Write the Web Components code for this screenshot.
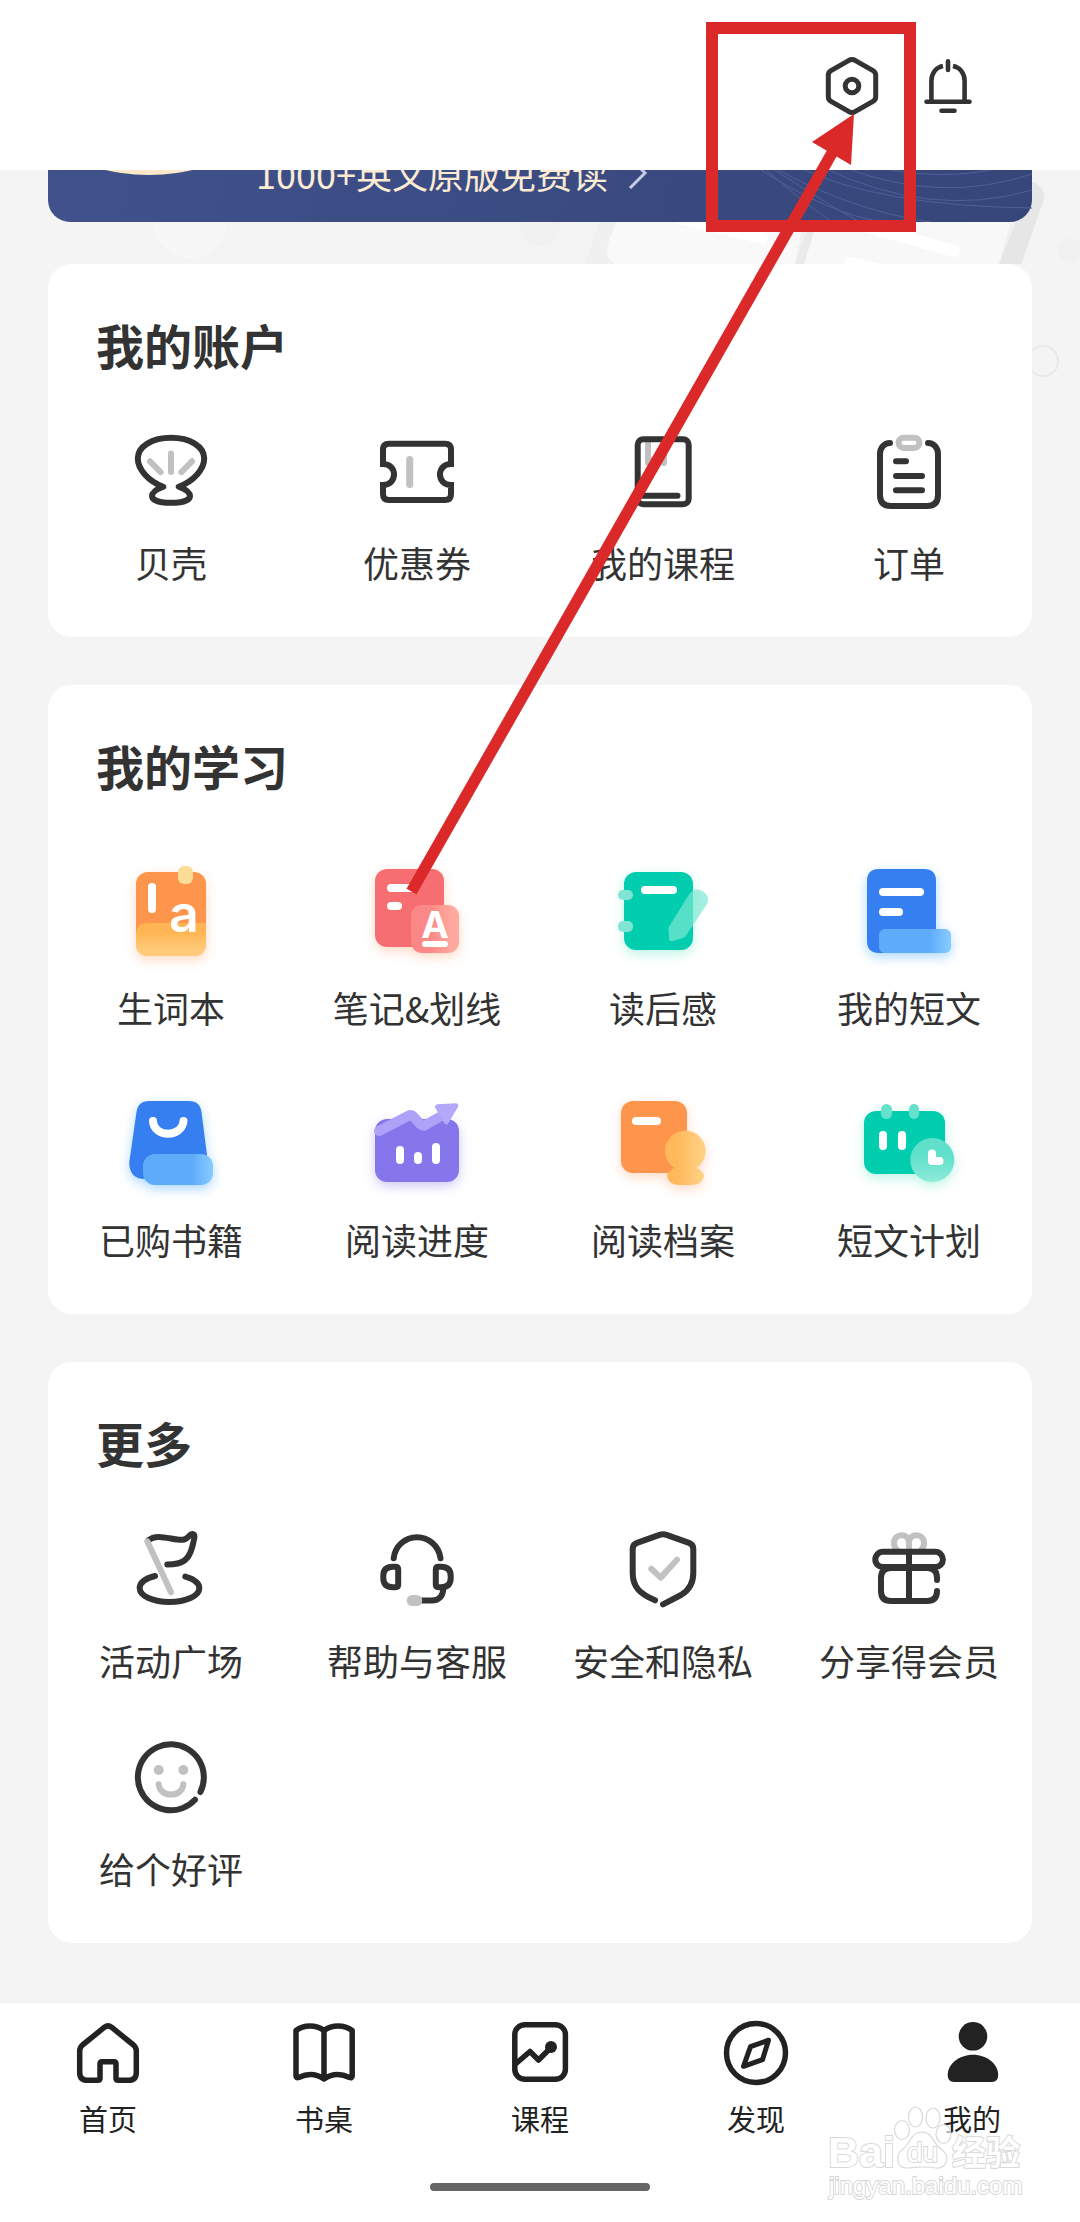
<!DOCTYPE html>
<html lang="zh-CN">
<head>
<meta charset="utf-8">
<meta name="viewport" content="width=device-width, initial-scale=1">
<title>我的</title>
<style>
  body {
    margin: 0;
    background: #f4f4f4;
    color: #333;
    font-family: "Noto Sans CJK SC", "Noto Sans", sans-serif;
  }
</style>
</head>
<body>
<profile-page>
  <top-bar slot="header"></top-bar>

  <promo-banner href="#vip">1000+英文原版免费读</promo-banner>

  <menu-card heading="我的账户">
    <menu-item icon="shell">贝壳</menu-item>
    <menu-item icon="coupon">优惠券</menu-item>
    <menu-item icon="course">我的课程</menu-item>
    <menu-item icon="order">订单</menu-item>
  </menu-card>

  <menu-card heading="我的学习">
    <menu-item icon="words">生词本</menu-item>
    <menu-item icon="notes">笔记&amp;划线</menu-item>
    <menu-item icon="review">读后感</menu-item>
    <menu-item icon="essay">我的短文</menu-item>
    <menu-item icon="bought">已购书籍</menu-item>
    <menu-item icon="progress">阅读进度</menu-item>
    <menu-item icon="archive">阅读档案</menu-item>
    <menu-item icon="plan">短文计划</menu-item>
  </menu-card>

  <menu-card heading="更多">
    <menu-item icon="flag">活动广场</menu-item>
    <menu-item icon="headset">帮助与客服</menu-item>
    <menu-item icon="shield">安全和隐私</menu-item>
    <menu-item icon="gift">分享得会员</menu-item>
    <menu-item icon="smile">给个好评</menu-item>
  </menu-card>

  <tab-bar slot="footer">
    <tab-item icon="home">首页</tab-item>
    <tab-item icon="desk">书桌</tab-item>
    <tab-item icon="lesson">课程</tab-item>
    <tab-item icon="discover">发现</tab-item>
    <tab-item icon="me" current>我的</tab-item>
  </tab-bar>

  <callout-layer slot="overlay"></callout-layer>
  <site-mark slot="overlay"></site-mark>
</profile-page>

<script>
// Each icon is [viewBox size, markup]. "s" strokes, "g" is the grey accent, "w" is white.
const ICONS = {
  settings: [72, `
    <g class="s" stroke-width="5">
      <path d="M33 10.3 Q36 8.7 39 10.3 L57 20.6 Q59.7 22.2 59.7 25.3 V46.7 Q59.7 49.8 57 51.4 L39 61.7 Q36 63.3 33 61.7 L15 51.4 Q12.3 49.8 12.3 46.7 V25.3 Q12.3 22.2 15 20.6Z"/>
      <circle cx="36" cy="36" r="6.8"/>
    </g>`],
  bell: [72, `
    <g class="s" stroke-width="4.6">
      <path d="M19.4 51 V31 C19.4 23 24 17.5 31 16" stroke-linecap="butt"/>
      <path d="M52.6 51 V31 C52.6 23 48 17.5 41 16" stroke-linecap="butt"/>
      <path d="M36 11.3 V20 M14.5 51.8 H57.5 M29.5 60.8 H42.5"/>
    </g>`],
  shell: [96, `
    <path class="s" d="M40.3 62.7 C25 57 14.8 45 14.8 34.5 C14.8 22.5 29 13.7 48 13.7 S81.2 22.5 81.2 34.5 C81.2 45 71 57 55.7 62.7 C62 65 67 68.5 67 72 C67 76.5 58.5 78.8 48 78.8 S29 76.5 29 72 C29 68.5 34 65 40.3 62.7Z"/>
    <path class="g" d="M27 37.3 L37.6 48.2 M48 29.5 V48 M69 37.3 L58.4 48.2"/>`],
  coupon: [96, `
    <path class="s" stroke-linejoin="miter" d="M14 40 V25.5 Q14 19.7 20 19.7 H76 Q82 19.7 82 25.5 V40 C75 40 71 45 71 50.5 S75 61 82 61 V70 Q82 76 76 76 H20 Q14 76 14 70 V61 C21 61 25 56 25 50.5 S21 40 14 40Z"/>
    <path class="g" stroke-width="7" d="M40.7 35.5 V60.5"/>`],
  course: [96, `
    <path class="g" d="M33 18 V39 L41 35 L49 39 V18"/>
    <rect class="s" x="22.7" y="15.2" width="51" height="65" rx="5.5"/>
    <path class="s" d="M24 71.7 H62.5"/>`],
  order: [96, `
    <path class="s" d="M29 19 C23 19 19 24 19 30 V71 Q19 82 30 82 H66 Q77 82 77 71 V30 C77 24 73 19 67 19"/>
    <path class="s" d="M35 37.3 H45 M35 52 H61 M35 66.3 H61"/>
    <rect class="g" x="37.6" y="13.7" width="20.8" height="10.2" rx="5"/>`],
  flag: [96, `
    <path class="s" d="M25.5 18.3 C34 10.5 50 18.6 60 17.8 C66 17 66 11.6 69.5 12 C73 12.6 71 17.5 69.5 24 C66 38 60 42.5 44.3 42.6"/>
    <path class="s" d="M32 54 C22 56.5 16.7 61 16.7 66.3 C16.7 74 30 80 46.5 80 S76.3 74 76.3 66.3 C76.3 61 71 57 62.3 54.6"/>
    <path class="g" d="M24.3 19.3 L48 70.3"/>`],
  headset: [96, `
    <path class="s" d="M24.7 36.3 C26 24 36 15.2 48 15.2 S70 24 71.5 36.3"/>
    <path class="s" d="M29.2 47.5 Q29.2 44.8 26.5 44.8 H24 Q14.3 44.8 14.3 54 V56 Q14.3 65.2 24 65.2 H26.5 Q29.2 65.2 29.2 62.5Z"/>
    <path class="s" d="M66.8 47.5 Q66.8 44.8 69.5 44.8 H72 Q81.7 44.8 81.7 54 V56 Q81.7 65.2 72 65.2 H69.5 Q66.8 65.2 66.8 62.5Z"/>
    <path class="s" d="M74.3 66 C74.3 74 70 78.6 63 78.6 H53"/>
    <rect x="37.7" y="73" width="15.6" height="11" rx="5.5" fill="#c1c1c1"/>`],
  shield: [96, `
    <path class="s" d="M40 78.3 C26 72 17.7 66 17.7 51 V27 Q17.7 22.3 22 20.8 L44.5 12.9 Q48 11.7 51.5 12.9 L74 20.8 Q78.3 22.3 78.3 27 V51 C78.3 60 74.5 68 66 73 L48 82.3"/>
    <path class="g" d="M36.3 46.7 L45.7 55.6 L62 37.8"/>`],
  gift: [96, `
    <path class="g" d="M48 28 V20.5 C48 10.5 33 11 33 21 Q33 25 36 28 M48 20.5 C48 10.5 63 11 63 21 Q63 25 60 28"/>
    <rect class="s" x="14.3" y="29.8" width="67.6" height="15.2" rx="7.6"/>
    <path class="s" d="M76 58 V56 Q76 46 66 46 H30 Q20 46 20 56 V69 Q20 79 30 79 H66 Q76 79 76 69"/>
    <path class="s" d="M48 30 V79"/>`],
  smile: [96, `
    <path class="s" d="M77.4 62 A33 33 0 1 0 72 69.8"/>
    <path class="g" d="M35.7 54.3 C36.5 68 59.5 68 60.3 54.3"/>
    <circle cx="35.7" cy="40" r="5" fill="#c1c1c1"/>
    <circle cx="60.3" cy="40" r="5" fill="#c1c1c1"/>`],

  words: [120, `
    <g class="warm">
      <rect x="25" y="27" width="70" height="84" rx="12" fill="#fe954c"/>
      <path d="M25 90 Q25 78 37 78 H95 V99 Q95 111 83 111 H37 Q25 111 25 99Z" fill="url(#amber)"/>
    </g>
    <rect x="67" y="21" width="15" height="18" rx="6" fill="#fddc95"/>
    <rect class="w" x="37" y="38" width="8" height="30" rx="4"/>
    <text class="w" x="73" y="87" font-size="52" font-weight="600" text-anchor="middle">a</text>`],
  notes: [120, `
    <g class="warm">
      <rect x="18" y="24" width="69" height="78" rx="12" fill="#f76e72"/>
      <rect x="54" y="60" width="48" height="48" rx="11" fill="url(#rose)"/>
    </g>
    <rect class="w" x="30" y="39" width="28" height="8" rx="4"/>
    <rect class="w" x="30" y="57" width="15" height="8" rx="4"/>
    <text class="w" x="78" y="93" font-size="37" font-weight="700" text-anchor="middle">A</text>
    <rect class="w" x="65" y="96" width="26" height="6" rx="3"/>`],
  review: [120, `
    <rect class="mint" x="21" y="27" width="69" height="78" rx="12" fill="#02ceaf"/>
    <rect class="w" x="38" y="41" width="36" height="8" rx="4"/>
    <rect x="15" y="45" width="15" height="10" rx="5" fill="#80e6d3"/>
    <rect x="15" y="76" width="15" height="11" rx="5" fill="#80e6d3"/>
    <path d="M65.5 82.5 L86 49.5 Q91.5 41.5 99.5 46 Q108 51.5 103.7 59.5 L83 90.5 Q82 92.3 80 93 L69.5 96 Q66.2 96.8 66 93.5Z" fill="rgba(123, 232, 209, 0.7)"/>`],
  essay: [120, `
    <g class="sky">
      <path d="M30 24 H75 Q87 24 87 36 V108 H30 Q18 108 18 96 V36 Q18 24 30 24Z" fill="#357ff0"/>
      <rect x="30" y="84" width="72" height="24" rx="6" fill="url(#azure)"/>
    </g>
    <rect class="w" x="30" y="43" width="45" height="8" rx="4"/>
    <rect class="w" x="30" y="63" width="24" height="8" rx="4"/>`],
  bought: [120, `
    <g class="sky">
      <path d="M38 24 H78 Q89 24 90.5 35 L97 86 Q97 102 84 102 H34 Q18 102 18.3 85 L25.5 35 Q27 24 38 24Z" fill="#357ff0"/>
      <rect x="32" y="77" width="70" height="31" rx="12" fill="url(#azure)"/>
    </g>
    <path d="M42 44 C43 61 71 61 72.5 44" fill="none" stroke="#fff" stroke-width="8" stroke-linecap="round"/>`],
  progress: [120, `
    <rect class="violet" x="18" y="42" width="84" height="63" rx="12" fill="#8576ec"/>
    <path d="M22 54 L52 38.5 Q54.5 37.5 56.5 39.5 L63 47 Q65.5 49.5 68.5 48 L86 38" fill="none" stroke="#aea2f8" stroke-width="10" stroke-linecap="round" stroke-linejoin="round"/>
    <path d="M80.5 29.8 L98.8 28.8 L89.3 44.8Z" fill="#b3a8f9" stroke="#b3a8f9" stroke-width="5" stroke-linejoin="round"/>
    <rect class="w" x="39" y="69" width="8" height="18" rx="4"/>
    <rect class="w" x="57" y="75" width="8" height="12" rx="4"/>
    <rect class="w" x="75" y="66" width="8" height="21" rx="4"/>`],
  archive: [120, `
    <g class="warm">
      <rect x="18" y="24" width="66" height="72" rx="12" fill="#fe954c"/>
      <path d="M69 92 Q82 85 96 92 Q101 96 101 99.5 Q99 108 88 108 H77 Q66 108 64 99.5 Q64 96 69 92Z" fill="url(#honey)"/>
      <circle cx="82.3" cy="74" r="20.3" fill="url(#honey)"/>
    </g>
    <rect class="w" x="29" y="40" width="29" height="8" rx="4"/>`],
  plan: [120, `
    <g class="mint">
      <rect x="15" y="34" width="81" height="63" rx="12" fill="#02ceaf"/>
      <circle cx="83.3" cy="83" r="22" fill="url(#aqua)"/>
    </g>
    <rect x="32" y="27" width="11" height="15" rx="5.5" fill="#66e1cc"/>
    <rect x="60" y="27" width="10" height="15" rx="5" fill="#66e1cc"/>
    <rect class="w" x="30" y="54" width="8" height="19" rx="4"/>
    <rect class="w" x="49" y="54" width="8" height="19" rx="4"/>
    <path d="M83 76.5 V84 H90.5" fill="none" stroke="#fff" stroke-width="8" stroke-linecap="round" stroke-linejoin="round"/>`],

  home: [72, `<path class="s t" d="M10.5 28 L32.5 10.2 Q36 7.6 39.5 10.2 L61.5 28 Q64.3 30.5 64.3 34 V55.5 Q64.3 63.3 56.5 63.3 H46 Q44 63.3 44 61.3 V46.7 Q44 44.7 42 44.7 H30 Q28 44.7 28 46.7 V61.3 Q28 63.3 26 63.3 H15.5 Q7.7 63.3 7.7 55.5 V34 Q7.7 30.5 10.5 28Z"/>`],
  desk: [72, `<path class="s t" d="M8 13.5 C16 7.5 28 7.5 36 13.5 C44 7.5 56 7.5 64.2 13.5 V59 Q64.2 61.5 61.5 60.5 C53 56.5 44 56.5 36 62 C28 56.5 19 56.5 10.8 60.5 Q8 61.5 8 59Z M36 13.5 V61"/>`],
  lesson: [72, `
    <rect class="s t" x="10.8" y="7.7" width="50.6" height="54.6" rx="10"/>
    <path class="s t" d="M12 46.5 L26 34.5 L34.5 43 L46 31.5"/>
    <circle class="f" cx="47" cy="30" r="6"/>`],
  discover: [72, `
    <circle class="s t" cx="36" cy="36" r="29.5"/>
    <path class="s t" stroke-width="5" d="M48.5 23.2 L30.5 29.7 L23.5 49.3 L42.5 42.7Z"/>`],
  me: [72, `
    <circle class="f" cx="37" cy="19.3" r="14.3"/>
    <path class="f" d="M37 37.7 C51 37.7 62.2 47 62.2 58 Q62.2 65 56 65 H18 Q11.7 65 11.7 58 C11.7 47 23 37.7 37 37.7Z"/>`],
};

const GRADIENTS = `
  <defs>
    <linearGradient id="amber" x1="0" y1="0" x2="0" y2="1"><stop offset="0.3" stop-color="#ffb553"/><stop offset="0.8" stop-color="#ffca7a"/></linearGradient>
    <linearGradient id="rose"><stop offset="0.4" stop-color="#fb8886"/><stop offset="0.85" stop-color="#ffa99f"/></linearGradient>
    <linearGradient id="azure"><stop offset="0.7" stop-color="#5eabfa"/><stop offset="1" stop-color="#88ccff"/></linearGradient>
    <linearGradient id="honey"><stop offset="0.3" stop-color="#ffb95c"/><stop offset="0.9" stop-color="#ffcf82"/></linearGradient>
    <linearGradient id="aqua" x1="0" y1="0" x2="0" y2="1"><stop offset="0.4" stop-color="#60e0cb"/><stop offset="1" stop-color="#8eead9"/></linearGradient>
  </defs>`;

const attach = (host, html) => {
  const template = document.createElement('template');
  template.innerHTML = html;
  host.attachShadow({mode: 'open'}).append(template.content.cloneNode(true));
};

class AppIcon extends HTMLElement {
  connectedCallback() {
    if (this.shadowRoot) {
      return;
    }
    const [size, shapes] = ICONS[this.getAttribute('name')];
    attach(this, `
      <style>
        :host { display: block; width: ${size}px; height: ${size}px; }
        svg { display: block; width: 100%; height: 100%; overflow: visible; }
        text { font-family: Inter, "Liberation Sans", sans-serif; }
        .s, .g { fill: none; stroke: #333; stroke-linecap: round; }
        .s:not([stroke-linejoin]), .g { stroke-linejoin: round; }
        .g { stroke: #c1c1c1; }
        .t { stroke: #222; }
        .f { fill: #222; }
        .w { fill: #fff; }
        .warm { filter: drop-shadow(0 4px 6px rgba(255, 150, 90, 0.35)); }
        .mint { filter: drop-shadow(0 4px 6px rgba(60, 225, 180, 0.35)); }
        .sky { filter: drop-shadow(0 4px 6px rgba(70, 170, 255, 0.45)); }
        .violet { filter: drop-shadow(0 4px 6px rgba(133, 118, 236, 0.4)); }
      </style>
      <svg viewBox="0 0 ${size} ${size}" stroke-width="${size === 72 ? 5.5 : 6}" aria-hidden="true">
        ${size === 120 ? GRADIENTS : ''}${shapes}
      </svg>`);
  }
}

class ProfilePage extends HTMLElement {
  constructor() {
    super();
    attach(this, `
      <style>
        :host { position: relative; display: flex; flex-direction: column; min-height: 100vh; overflow: hidden; }
        main { position: relative; flex: 1; display: flex; flex-direction: column; gap: 48px; padding: 0 48px 60px; }
        ::slotted([slot="header"]) { position: relative; z-index: 2; }
        .backdrop { position: absolute; top: 0; right: 0; width: 1080px; height: 240px; }
      </style>
      <slot name="header"></slot>
      <main>
        <svg class="backdrop" viewBox="0 170 1080 240" aria-hidden="true">
          <ellipse cx="190" cy="225" rx="36" ry="33" fill="#f7f7f7"/>
          <circle cx="540" cy="226" r="20" fill="#f1f1f1"/>
          <path d="M585 264 L610 190 H1015 Q1045 180 1044 200 L1022 264Z" fill="#f0f0f0"/>
          <path d="M615 264 Q604 257 608 244 L628 190 H810 L795 264Z" fill="#f9f9f9"/>
          <path d="M804 264 L828 190 H1020 L999 264Z" fill="#f8f8f8"/>
          <path d="M999 264 L1032 182 Q1045 186 1044 199 L1021 264Z" fill="#e6e6e6"/>
          <path d="M795 264 L812 216 H818 L804 264Z" fill="#eaeaea"/>
          <path d="M680 218 L762 238 M850 222 L954 251 M850 263 L880 270" stroke="#fff" stroke-width="12" stroke-linecap="round"/>
          <circle cx="1070" cy="250" r="12" fill="#f1f1f1"/>
          <circle cx="1043" cy="361" r="15" fill="none" stroke="#e9e9e9" stroke-width="2"/>
        </svg>
        <slot></slot>
      </main>
      <slot name="footer"></slot>
      <slot name="overlay"></slot>`);
  }
}

class TopBar extends HTMLElement {
  constructor() {
    super();
    attach(this, `
      <style>
        :host { display: block; background: #fff; }
        header { display: flex; justify-content: flex-end; align-items: center; gap: 24px; padding: 50px 96px 48px; }
        button { padding: 0; border: 0; background: none; cursor: pointer; }
      </style>
      <header>
        <button type="button" aria-label="设置"><app-icon name="settings"></app-icon></button>
        <button type="button" aria-label="消息"><app-icon name="bell"></app-icon></button>
      </header>`);
  }
}

// The banner is scrolled partly under the top bar.
class PromoBanner extends HTMLElement {
  constructor() {
    super();
    attach(this, `
      <style>
        :host { position: relative; display: block; margin-top: -100px; margin-bottom: -6px; }
        a {
          display: flex; align-items: center; gap: 20px; padding: 78px 0 24px 208px;
          border-radius: 22px; background: linear-gradient(100deg, #40518c, #36467a);
          color: #fcebd3; font-size: 36px; line-height: 50px; text-decoration: none; overflow: hidden;
        }
        .art { position: absolute; top: 0; right: 0; width: 984px; height: 152px; }
        .chevron { width: 20px; height: 32px; }
      </style>
      <a href="${this.getAttribute('href')}">
        <svg class="art" viewBox="48 70 984 152" fill="none" aria-hidden="true">
          <ellipse cx="149" cy="150" rx="72" ry="25" fill="#fde9c8"/>
          <g stroke="#505f95" stroke-width="1">
            <path d="M758 168 Q830 215 884 222 M775 168 Q850 210 930 222 M800 168 Q880 206 1032 208"/>
            <path d="M820 166 Q930 220 1032 190 M840 166 Q940 205 1032 174 M870 166 Q940 182 1000 168"/>
            <path d="M764 168 Q800 200 832 222 M772 168 Q830 206 860 222"/>
          </g>
        </svg>
        <slot></slot>
        <svg class="chevron" viewBox="0 0 20 32" fill="none" stroke="#c6cbe0" stroke-width="3" aria-hidden="true">
          <path d="M2 1 L17 16 L2 31"/>
        </svg>
      </a>`);
  }
}

class MenuCard extends HTMLElement {
  constructor() {
    super();
    attach(this, `
      <style>
        :host { position: relative; display: block; border-radius: 24px; background: #fff; padding: 48px 0 53px; }
        h2 { margin: 0 48px 48px; font-size: 48px; line-height: 64px; font-weight: 700; }
        nav { display: grid; grid-template-columns: repeat(4, 1fr); row-gap: 48px; }
      </style>
      <h2>${this.getAttribute('heading')}</h2>
      <nav><slot></slot></nav>`);
  }
}

class MenuItem extends HTMLElement {
  constructor() {
    super();
    const icon = this.getAttribute('icon');
    attach(this, `
      <style>
        :host { display: block; }
        a {
          display: flex; flex-direction: column; align-items: center; gap: 20px;
          color: inherit; font-size: 36px; line-height: 44px; text-decoration: none; white-space: nowrap;
        }
      </style>
      <a href="#${icon}"><app-icon name="${icon}"></app-icon><span><slot></slot></span></a>`);
  }
}

class TabBar extends HTMLElement {
  constructor() {
    super();
    attach(this, `
      <style>
        :host { display: block; background: #fff; }
        nav { display: flex; padding-top: 14px; }
        .handle { width: 220px; height: 8px; margin: 47px auto 31px; border-radius: 4px; background: #666; }
      </style>
      <nav><slot></slot></nav>
      <div class="handle"></div>`);
  }
}

class TabItem extends HTMLElement {
  constructor() {
    super();
    const icon = this.getAttribute('icon');
    attach(this, `
      <style>
        :host { display: block; flex: 1; }
        a {
          display: flex; flex-direction: column; align-items: center; gap: 11px;
          color: #222; font-size: 29px; line-height: 36px; text-decoration: none;
        }
      </style>
      <a href="#${icon}" ${this.hasAttribute('current') ? 'aria-current="page"' : ''}>
        <app-icon name="${icon}"></app-icon><span><slot></slot></span>
      </a>`);
  }
}

// Red frame and arrow pointing at the settings button.
class CalloutLayer extends HTMLElement {
  constructor() {
    super();
    attach(this, `
      <style>
        :host { position: absolute; top: 0; right: 0; z-index: 3; pointer-events: none; }
        svg { display: block; }
      </style>
      <svg width="1080" height="920" aria-hidden="true">
        <rect x="712" y="28" width="198" height="198" fill="none" stroke="#db292a" stroke-width="12"/>
        <path d="M411.5 891.5 L832 153" stroke="#db292a" stroke-width="11.5"/>
        <path d="M854 114 L812 142 L851 165Z" fill="#db292a"/>
      </svg>`);
  }
}

class SiteMark extends HTMLElement {
  constructor() {
    super();
    attach(this, `
      <style>
        :host { position: absolute; right: 50px; bottom: 10px; z-index: 3; pointer-events: none; }
        svg { display: block; }
        g { fill: rgba(255, 255, 255, 0.65); stroke: #d9d9d9; stroke-width: 1.2; }
        text { font-family: "Liberation Sans", "Noto Sans CJK SC", sans-serif; paint-order: stroke; stroke-width: 2; fill: #fff; }
      </style>
      <svg width="210" height="112" viewBox="820 2100 210 112">
        <g>
          <ellipse cx="902" cy="2130" rx="7.5" ry="9.5"/>
          <ellipse cx="915.5" cy="2117" rx="7" ry="10"/>
          <ellipse cx="933" cy="2118" rx="7" ry="10"/>
          <ellipse cx="943.5" cy="2134" rx="7.5" ry="9.5"/>
          <path d="M922 2132 C933 2132 933 2144 941 2149 C951 2156 947 2169 936 2168 C930 2167 926 2167 922 2167 S912 2168 907 2168 C896 2168 895 2155 903 2149 C911 2143 911 2132 922 2132Z"/>
          <text x="828" y="2167" font-size="43" font-weight="700">Bai</text>
          <text x="907" y="2162" font-size="28">du</text>
          <text x="952" y="2165" font-size="34" font-weight="700">经验</text>
          <text x="829" y="2194" font-size="24">jingyan.baidu.com</text>
        </g>
      </svg>`);
  }
}

customElements.define('app-icon', AppIcon);
customElements.define('profile-page', ProfilePage);
customElements.define('top-bar', TopBar);
customElements.define('promo-banner', PromoBanner);
customElements.define('menu-card', MenuCard);
customElements.define('menu-item', MenuItem);
customElements.define('tab-bar', TabBar);
customElements.define('tab-item', TabItem);
customElements.define('callout-layer', CalloutLayer);
customElements.define('site-mark', SiteMark);
</script>
</body>
</html>
